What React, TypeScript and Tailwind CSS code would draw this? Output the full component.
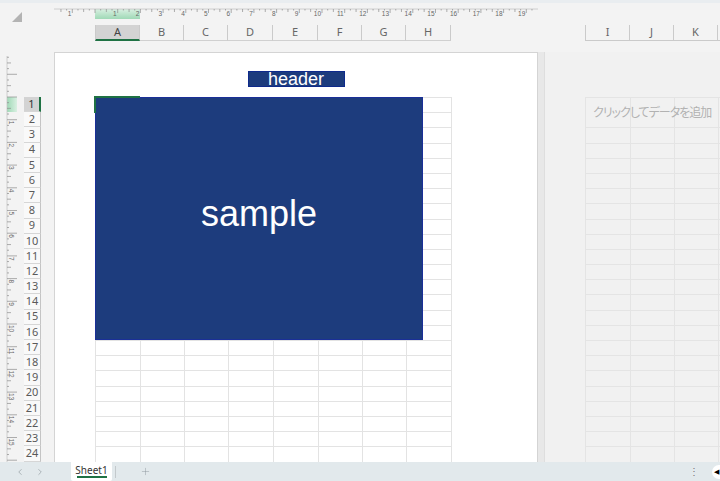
import { ChevronLeft, ChevronRight, Plus } from "lucide-react";

const CM = 22.7;
const ROWS = Array.from({ length: 24 }, (_, i) => i + 1);
const COLS = [
  { l: "A", wide: true },
  { l: "B", wide: false },
  { l: "C", wide: false },
  { l: "D", wide: true },
  { l: "E", wide: true },
  { l: "F", wide: false },
  { l: "G", wide: false },
  { l: "H", wide: true },
];

function TopRuler() {
  const origin = 41;
  const ticks = [];
  for (let i = -7; i <= 78; i++) {
    const x = origin + (i * CM) / 4;
    if (x < 2 || x > 482) continue;
    const len = i % 4 === 0 ? 4 : i % 2 === 0 ? 3 : 1.5;
    ticks.push(<line key={i} x1={x} x2={x} y1={1} y2={1 + len} stroke="#8c8c8c" strokeWidth={0.7} />);
  }
  const labels = [{ n: 1, x: origin - CM }];
  for (let n = 1; n <= 19; n++) labels.push({ n, x: origin + n * CM });
  return (
    <svg width={484} height={12} className="block">
      <defs>
        <linearGradient id="gt" x1="0" y1="0" x2="0" y2="1">
          <stop offset="0" stopColor="#d9f0e2" />
          <stop offset="1" stopColor="#9fd9b6" />
        </linearGradient>
      </defs>
      <rect x={41} y={1} width={45} height={10} fill="url(#gt)" />
      <line x1={0} x2={484} y1={1} y2={1} stroke="#c4c4c4" strokeWidth={0.8} />
      {ticks}
      {labels.map((l, i) => (
        <text key={i} x={l.x - 1} y={8} fontSize={6.5} fill="#666" textAnchor="end" fontFamily="Liberation Sans, sans-serif">
          {l.n}
        </text>
      ))}
    </svg>
  );
}

function LeftRuler() {
  const origin = 45;
  const ticks = [];
  for (let i = -7; i <= 66; i++) {
    const y = origin + (i * CM) / 4;
    if (y < 4 || y > 410) continue;
    const len = i % 4 === 0 ? 10 : i % 2 === 0 ? 4 : 2;
    ticks.push(<line key={i} y1={y} y2={y} x1={1} x2={1 + len} stroke="#8c8c8c" strokeWidth={0.7} />);
  }
  const labels = [];
  for (let n = 1; n <= 15; n++) labels.push({ n, y: origin + n * CM });
  return (
    <svg width={12} height={410} className="block">
      <defs>
        <linearGradient id="gl" x1="0" y1="0" x2="1" y2="0">
          <stop offset="0" stopColor="#9fd9b6" />
          <stop offset="1" stopColor="#d9f0e2" />
        </linearGradient>
      </defs>
      <rect x={1} y={45} width={10} height={15} fill="url(#gl)" />
      <line x1={1} x2={1} y1={4} y2={410} stroke="#c4c4c4" strokeWidth={0.8} />
      {ticks}
      {labels.map((l) => (
        <text
          key={l.n}
          x={0}
          y={0}
          fontSize={6.5}
          fill="#666"
          fontFamily="Liberation Sans, sans-serif"
          transform={`translate(3 ${l.y + 1}) rotate(90)`}
        >
          {l.n}
        </text>
      ))}
    </svg>
  );
}

export default function App() {
  return (
    <div className="w-[720px] h-[481px] bg-[#f3f3f3] flex flex-col overflow-hidden font-['Liberation_Sans',Arial,sans-serif]">
      {/* top band: corner, ruler, column headers */}
      <div className="h-[52px] flex shrink-0 border-t-[3px] border-[#e9edf0]">
        <div className="w-[54px] shrink-0 pl-[12px] pt-[9px]">
          <div className="w-0 h-0 border-l-[10px] border-l-transparent border-b-[10px] border-b-[#b3b3b3]" />
        </div>
        <div className="w-[666px] shrink-0 flex flex-col">
          <div className="mt-[5px]">
            <TopRuler />
          </div>
          <div className="mt-[5px] flex h-[16px] text-[11px] text-[#666] font-['Noto_Sans',sans-serif]">
            <div className="w-[41px] shrink-0" />
            {COLS.map((c, i) => (
              <div
                key={c.l}
                className={`${c.wide ? "w-[45px]" : "w-[44px]"} shrink-0 flex items-center justify-center border-r border-[#cacaca] ${
                  i === 0 ? "bg-[#d3d3d3] border-l border-b-2 border-b-[#1f7244] text-[#444]" : "border-b border-b-[#d0d0d0]"
                }`}
              >
                {c.l}
              </div>
            ))}
            <div className="w-[134px] shrink-0" />
            {["I", "J", "K"].map((l, i) => (
              <div
                key={l}
                className={`${i === 0 ? "w-[45px] border-l" : "w-[44px]"} shrink-0 flex items-center justify-center border-r border-b border-[#cacaca]`}
              >
                {l}
              </div>
            ))}
            <div className="flex-1 border-b border-[#cacaca]" />
          </div>
        </div>
      </div>

      {/* main area */}
      <div className="h-[410px] flex shrink-0">
        <div className="w-[54px] flex shrink-0">
          <div className="ml-[6px]">
            <LeftRuler />
          </div>
          <div className="ml-[6px] w-[17px] pt-[45px] text-[11px] text-[#5a5a5a] font-['Noto_Sans',sans-serif]">
            {ROWS.map((r) => (
              <div
                key={r}
                className={`h-[15.2px] flex items-center justify-center border-b border-[#d6d6d6] ${
                  r === 1 ? "bg-[#d3d3d3] border-r-2 border-r-[#1f7244] text-[#333]" : "bg-[#f9f9f9] border-r border-r-[#c4c4c4]"
                }`}
              >
                {r}
              </div>
            ))}
          </div>
        </div>

        {/* printed page */}
        <div className="relative w-[484px] shrink-0 bg-white border-l border-t border-r border-[#d4d4d4] overflow-hidden">
          <div className="pt-[18px] flex justify-center">
            <div className="w-[97px] h-[16px] bg-[#1d3c7d] border border-[#0e2a8c] flex items-center justify-center text-white text-[18px] leading-none">
              header
            </div>
          </div>
          <div className="mt-[10px] ml-[40px] border-t border-l border-[#e3e3e3] w-[357px]">
            {ROWS.map((r) => (
              <div key={r} className="flex h-[15.2px]">
                {COLS.map((c) => (
                  <div
                    key={c.l}
                    className={`${c.wide ? "w-[45px]" : "w-[44px]"} h-full border-r border-b border-[#e3e3e3]`}
                  />
                ))}
              </div>
            ))}
          </div>
          <div className="absolute left-[40px] top-[44px] w-[328px] h-[243px] bg-[#1d3c7d] border border-[#1a2f98] flex items-center justify-center pb-[10px]">
            <span className="text-white text-[36px] leading-none">sample</span>
          </div>
          <div className="absolute left-[39px] top-[43px] w-[46px] h-[17px] border-l-2 border-t-2 border-[#1f7244]" />
        </div>

        <div className="w-[6px] shrink-0 bg-[#e8e8e8]" />

        {/* next page (empty) */}
        <div className="relative flex-1 bg-[#f1f1f1] border-l border-[#dedede] overflow-hidden">
          <div className="mt-[45px] ml-[40px] border-t border-l border-[#e4e4e4]">
            {ROWS.slice(1).map((r) => (
              <div key={r} className={`flex ${r === 2 ? "h-[30.4px]" : "h-[15.2px]"}`}>
                <div className="w-[45px] shrink-0 h-full border-r border-b border-[#e4e4e4]" />
                <div className="w-[44px] shrink-0 h-full border-r border-b border-[#e4e4e4]" />
                <div className="w-[44px] shrink-0 h-full border-r border-b border-[#e4e4e4]" />
                <div className="flex-1 h-full border-b border-[#e4e4e4]" />
              </div>
            ))}
          </div>
          <div className="absolute left-[48px] top-[54px] whitespace-nowrap text-[12px] tracking-[-1px] leading-none text-[#b2b2b2] [font-feature-settings:'palt'] font-['Noto_Sans_CJK_JP',sans-serif]">
            クリックしてデータを追加
          </div>
        </div>
      </div>

      {/* sheet tabs */}
      <div className="h-[19px] flex items-center bg-[#e2e9ec] shrink-0 text-[#8a9499]">
        <div className="w-[71px] shrink-0 flex items-center pl-[15px] gap-[10px]">
          <ChevronLeft size={10} strokeWidth={1.5} />
          <ChevronRight size={10} strokeWidth={1.5} />
        </div>
        <div className="w-[41px] shrink-0 h-full bg-white flex flex-col items-center justify-start pt-[2px] rounded-b-[2px]">
          <span className="text-[10px] leading-[12px] text-[#333] font-['Noto_Sans',sans-serif]">Sheet1</span>
          <div className="w-[30px] h-[2px] bg-[#1f7244]" />
        </div>
        <div className="ml-[3px] h-[12px] border-l border-[#c3c9cc]" />
        <Plus size={11} strokeWidth={1} className="ml-[24px]" />
        <div className="flex-1" />
        <span className="text-[10px] text-[#777] leading-none">⋮</span>
        <div className="ml-[7px] w-[14px] h-[14px] rounded-full bg-white flex items-center pl-[2px] shrink-0 translate-x-[6px]">
          <span className="text-[7px] text-black leading-none">◀</span>
        </div>
      </div>
    </div>
  );
}
